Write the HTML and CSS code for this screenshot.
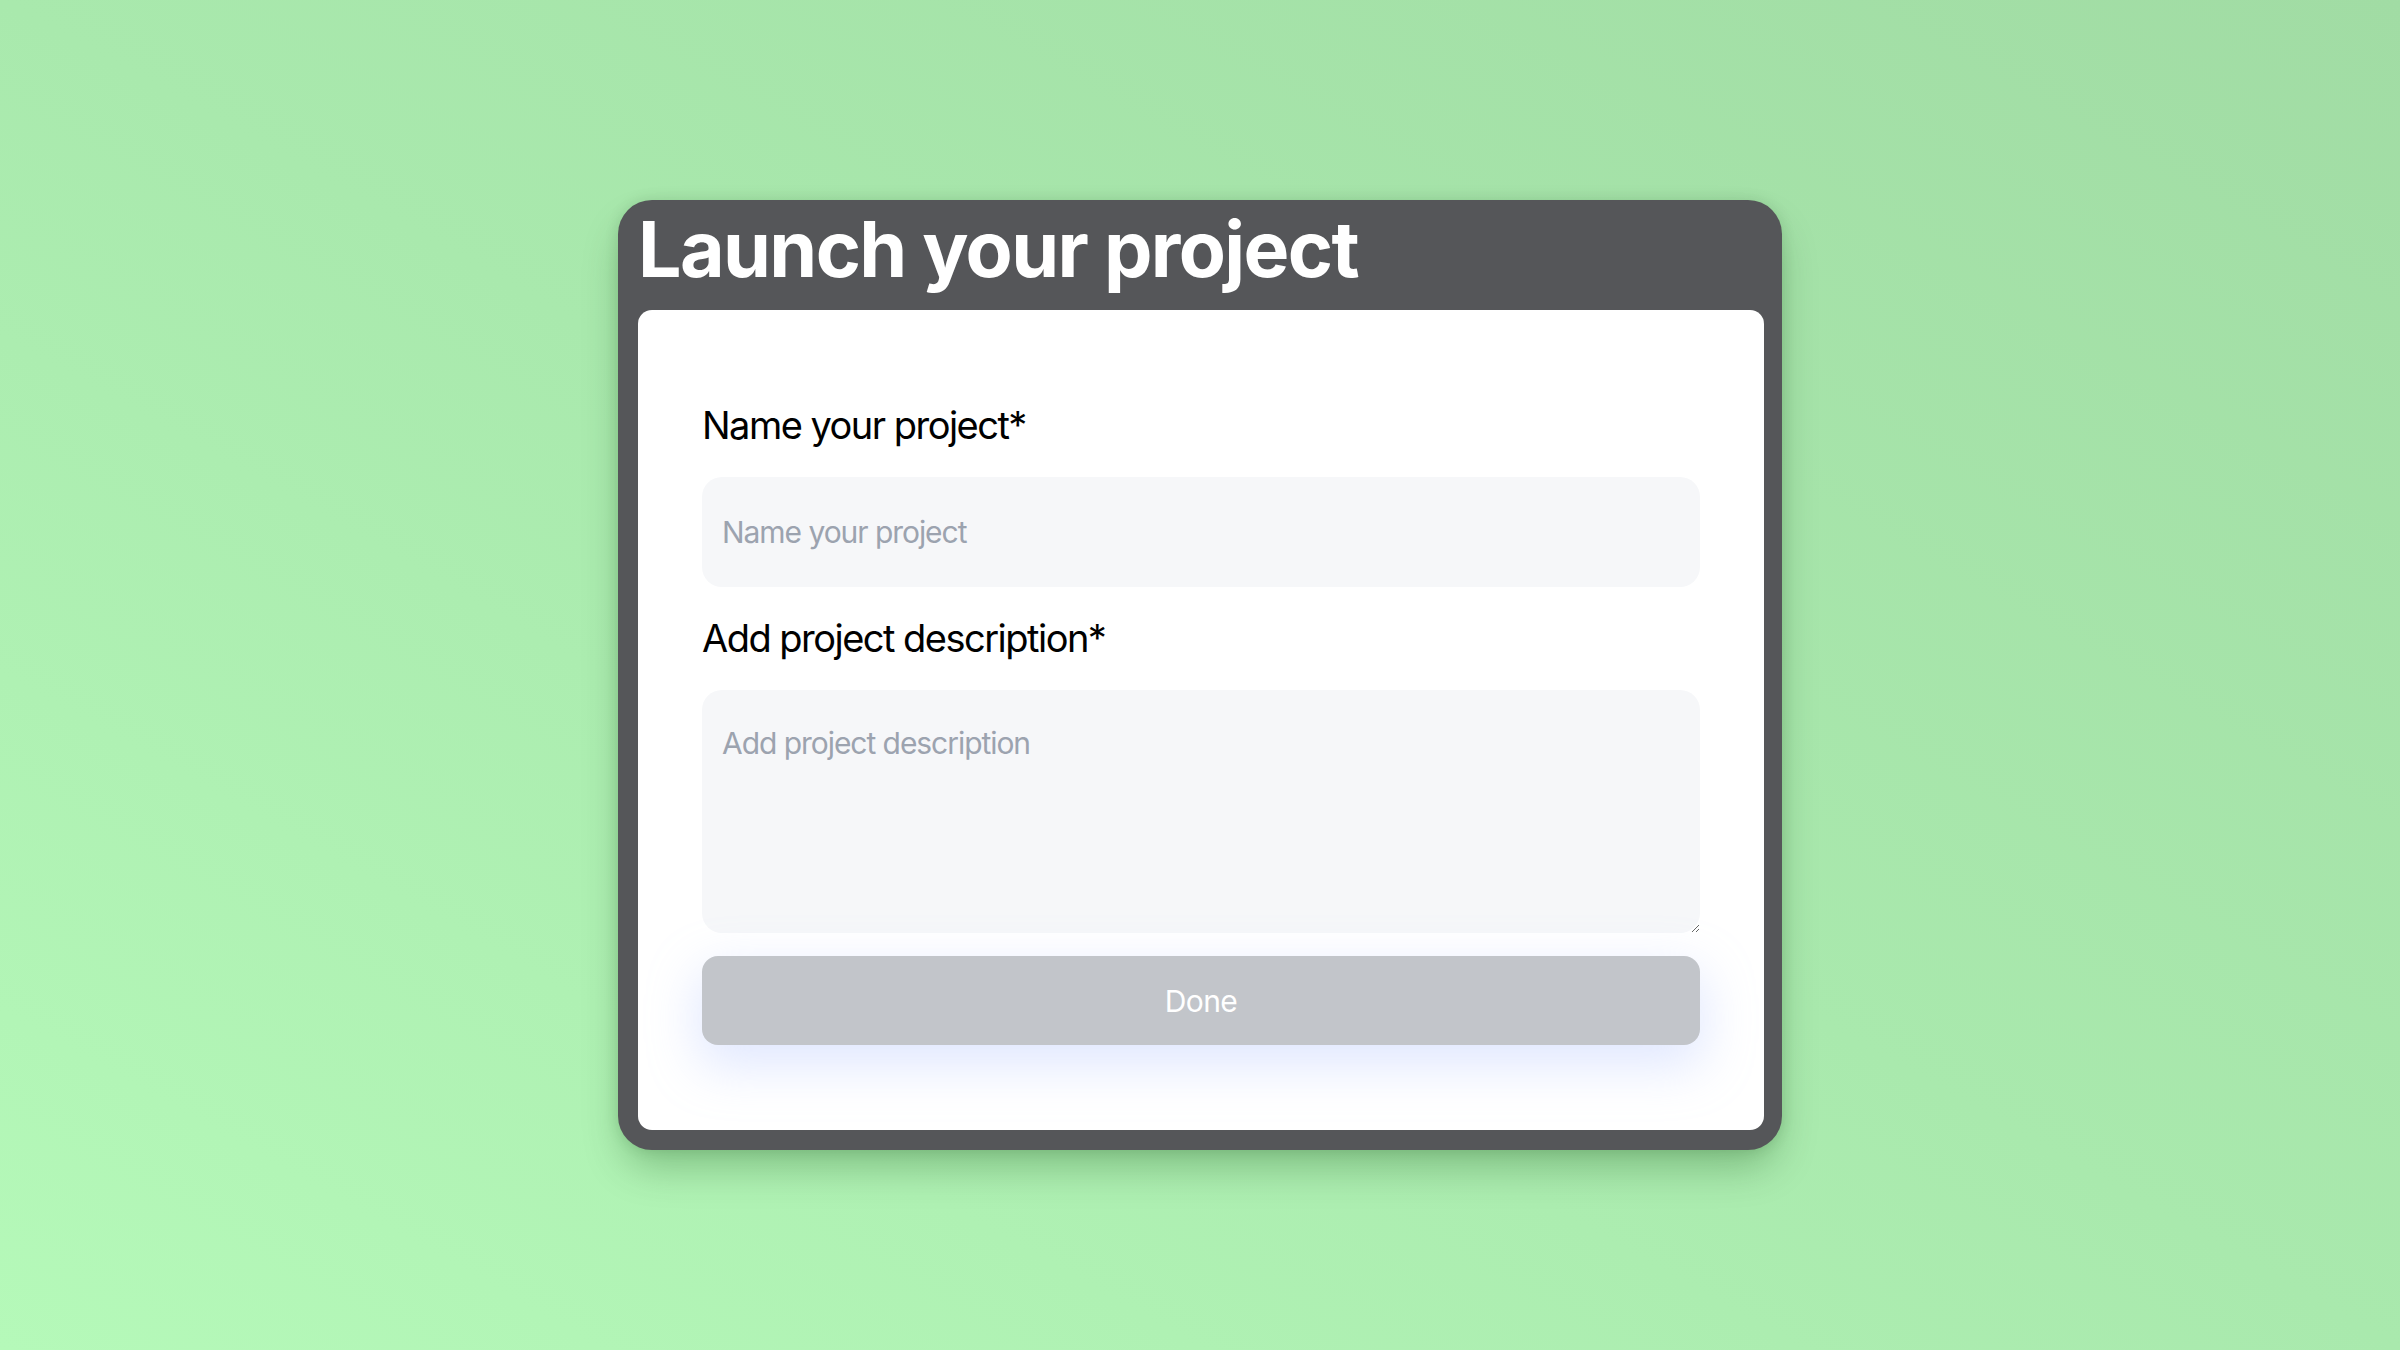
FILE: index.html
```html
<!DOCTYPE html>
<html lang="en">
<head>
<meta charset="utf-8">
<title>Launch your project</title>
<link rel="stylesheet" href="styles.css">
</head>
<body>
<main class="stage">
  <section class="card">
    <h1 class="card-title">Launch your project</h1>
    <form class="panel">
      <label class="field-label" for="name">Name your project*</label>
      <input class="field-input" id="name" type="text" placeholder="Name your project">
      <label class="field-label" for="desc">Add project description*</label>
      <textarea class="field-textarea" id="desc" placeholder="Add project description"></textarea>
      <button class="done-btn" type="button">Done</button>
    </form>
  </section>
</main>
</body>
</html>
```
FILE: styles.css
```css
* { box-sizing: border-box; }

html, body {
  margin: 0;
  padding: 0;
}

body {
  width: 2400px;
  height: 1350px;
  font-family: Inter, "Noto Sans", sans-serif;
  background: linear-gradient(to top right, #b5f9b9 0%, #a9e9ad 50%, #a1dca4 100%);
}

.stage {
  height: 100%;
  display: flex;
  align-items: center;
  justify-content: center;
}

.card {
  width: 1164px;
  background: #555659;
  border-radius: 34px;
  padding: 11px 18px 20px 20px;
  box-shadow: 0 22px 40px -6px rgba(0, 60, 0, 0.28), 0 0 14px rgba(0, 60, 0, 0.12);
}

.card-title {
  margin: 0 0 22px 0;
  font-size: 77px;
  line-height: 77px;
  font-weight: 700;
  letter-spacing: -0.021em;
  color: #ffffff;
  white-space: nowrap;
}

.panel {
  background: #ffffff;
  border-radius: 14px;
  padding: 87px 64px 85px 64px;
  display: flex;
  flex-direction: column;
  gap: 23px;
}

.field-label {
  font-size: 38px;
  line-height: 57px;
  height: 57px;
  font-weight: 400;
  letter-spacing: -0.04em;
  color: #000000;
}

.field-input,
.field-textarea {
  width: 100%;
  border: none;
  outline: none;
  background: #f6f7f9;
  border-radius: 20px;
  font-family: Inter, "Noto Sans", sans-serif;
  font-size: 30px;
  letter-spacing: -0.035em;
  color: #111827;
  padding: 0 20px;
}

.field-input {
  height: 110px;
}

.field-textarea {
  display: block;
  height: 243px;
  padding-top: 31px;
  line-height: 45px;
  resize: vertical;
}

.field-input::placeholder,
.field-textarea::placeholder {
  color: #9ca3af;
  opacity: 1;
}

.done-btn {
  height: 89px;
  width: 100%;
  border: none;
  border-radius: 16px;
  background: #c2c5ca;
  color: #ffffff;
  font-family: Inter, "Noto Sans", sans-serif;
  font-size: 30px;
  letter-spacing: -0.02em;
  box-shadow: 0 18px 50px 4px rgba(170, 190, 255, 0.35);
  cursor: not-allowed;
}
```
